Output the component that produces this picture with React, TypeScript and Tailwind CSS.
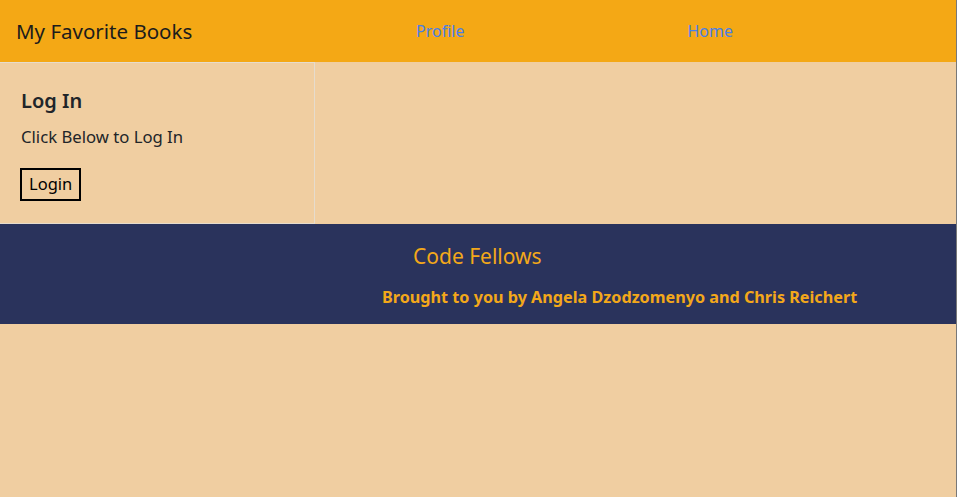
const App = () => {
  return (
    <div className="min-h-screen bg-[#f0cea1] border-r border-[#787878] font-['Noto_Sans',sans-serif] text-[#212529]">
      <header className="h-[62px] bg-[#f4a815] flex items-center">
        <div className="w-[416px] pl-4 text-[20.5px] text-[#1c1c1c]">My Favorite Books</div>
        <a href="#" className="text-[16px] text-[#4a7fe6]">Profile</a>
        <a href="#" className="ml-[223px] text-[16px] text-[#4a7fe6]">Home</a>
      </header>

      <div className="flex">
        <div className="w-[315px] h-[162px] border border-l-0 border-[#e6dccd] pl-[21px] pt-[24px]">
          <h2 className="text-[20px] font-semibold leading-[28px]">Log In</h2>
          <p className="mt-[10px] text-[16.7px] leading-[24px]">Click Below to Log In</p>
          <button className="mt-[19px] -ml-px border-2 border-black px-[7px] h-[33px] text-[16.5px] text-black leading-none">
            Login
          </button>
        </div>
      </div>

      <footer className="h-[100px] bg-[#2a335c] text-[#f3a81a] pt-[18px]">
        <div className="pl-[413px] text-[21px] leading-[28px]">Code Fellows</div>
        <div className="mt-[15px] pl-[382px] text-[16.2px] font-bold leading-[24px]">
          Brought to you by Angela Dzodzomenyo and Chris Reichert
        </div>
      </footer>
    </div>
  );
};

export default App;
